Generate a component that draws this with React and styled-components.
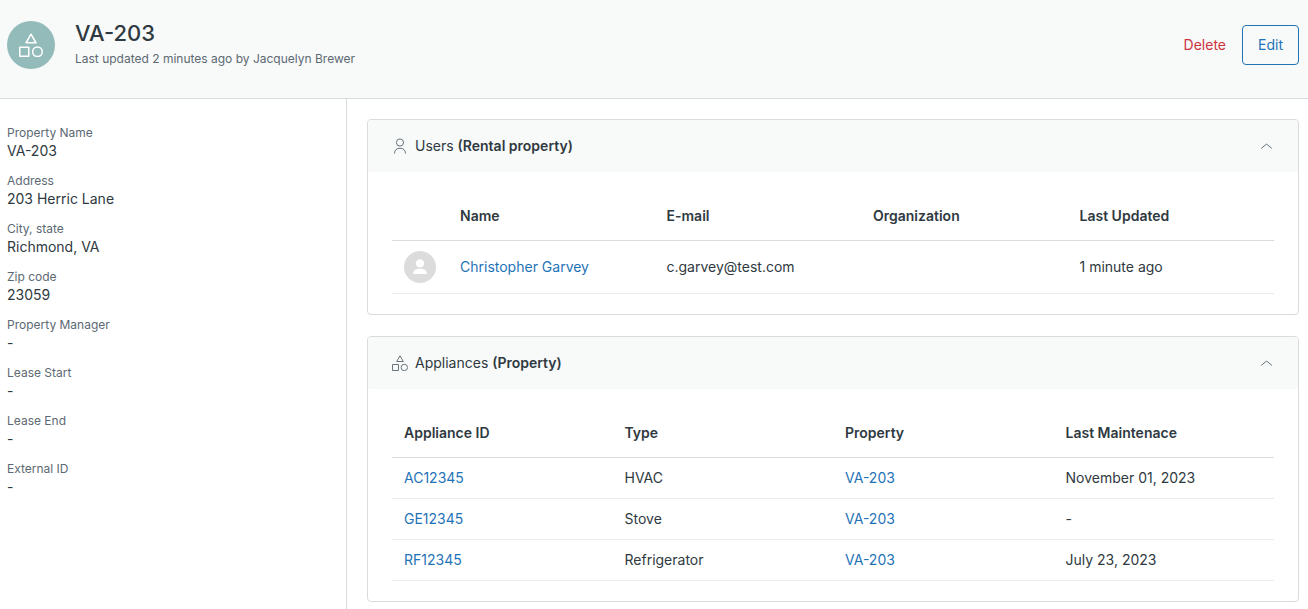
import React from 'react'
import styled, { createGlobalStyle } from 'styled-components';

const GlobalStyle = createGlobalStyle`
  * {
    box-sizing: border-box;
  }
  body {
    margin: 0;
    background: #fff;
    color: #2f3941;
    font-family: Inter, "Liberation Sans", sans-serif;
    font-size: 14px;
    line-height: 20px;
  }
  #root {
    display: flex;
    flex-direction: column;
    min-height: 100vh;
  }
`;

const Header = styled.header`
  display: flex;
  align-items: flex-start;
  gap: 20px;
  padding: 21px 9px 29px 7px;
  background: #f8faf9;
  border-bottom: 1px solid #d8dcde;
`;

const HeaderIcon = styled.div`
  display: flex;
  align-items: center;
  justify-content: center;
  width: 48px;
  height: 48px;
  border-radius: 50%;
  background: #93bbb9;
  color: #fff;
`;

const HeaderText = styled.div`
  flex: 1;
`;

const Title = styled.h1`
  margin: 0;
  font-size: 22px;
  font-weight: 500;
  line-height: 24px;
`;

const Updated = styled.p`
  margin: 5px 0 0;
  color: #5c6973;
  font-size: 12px;
  line-height: 18px;
`;

const Actions = styled.div`
  display: flex;
  align-items: center;
  align-self: center;
`;

const Button = styled.button`
  height: 40px;
  padding: 0 15px;
  border: 1px solid #1f73b7;
  border-radius: 4px;
  background: transparent;
  color: #1f73b7;
  font: inherit;
  cursor: pointer;
`;

const DeleteButton = styled(Button)`
  border-color: transparent;
  color: #cc3340;
`;

const Layout = styled.div`
  display: flex;
  flex: 1;
`;

const Sidebar = styled.aside`
  flex: 0 0 347px;
  padding: 25px 7px;
  border-right: 1px solid #d8dcde;
`;

const Fields = styled.dl`
  display: flex;
  flex-direction: column;
  gap: 12px;
  margin: 0;
`;

const Label = styled.dt`
  color: #5c6973;
  font-size: 12px;
  line-height: 18px;
`;

const Value = styled.dd`
  margin: 0;
  line-height: 18px;
`;

const Content = styled.main`
  display: flex;
  flex: 1;
  flex-direction: column;
  gap: 21px;
  min-width: 0;
  padding: 20px 9px 8px 20px;
`;

const Card = styled.section`
  border: 1px solid #d8dcde;
  border-radius: 4px;
`;

const CardHeader = styled.button`
  display: flex;
  align-items: center;
  gap: 7px;
  width: 100%;
  height: 52px;
  padding: 0 24px;
  border: none;
  border-radius: 3px;
  background: #f8faf9;
  color: inherit;
  font: inherit;
  text-align: left;
  cursor: pointer;

  svg {
    color: #68737d;
  }
`;

const CardTitle = styled.span`
  flex: 1;

  b {
    font-weight: 600;
  }
`;

const CardBody = styled.div`
  padding: 20px 24px;
`;

const Table = styled.table`
  width: 100%;
  table-layout: fixed;
  border-spacing: 0;
  text-align: left;
`;

const Th = styled.th`
  width: ${props => props.$width || 'auto'};
  height: 49px;
  padding: 0 12px;
  border-bottom: 1px solid #d8dcde;
  font-weight: 600;
`;

const Td = styled.td`
  padding: 10px 12px;
  border-bottom: 1px solid #e9ebed;
`;

const Link = styled.a`
  color: #1f73b7;
  text-decoration: none;
`;

const UserAvatar = styled.svg`
  display: block;
  width: 32px;
  height: 32px;
`;

const ShapesIcon = ({ size }) => (
  <svg width={size} height={size} viewBox="0 0 16 16" fill="none" stroke="currentColor" strokeLinejoin="round">
    <path d="M8 .8l3.3 5.7H4.7z" />
    <rect x=".5" y="9.5" width="6" height="6" />
    <circle cx="12.3" cy="12.5" r="3.2" />
  </svg>
)

const UserIcon = () => (
  <svg width="16" height="16" viewBox="0 0 16 16" fill="none" stroke="currentColor" strokeLinecap="round">
    <circle cx="8" cy="4.5" r="3.6" />
    <path d="M2.5 15.2c0-3 2.2-5 5.5-5s5.5 2 5.5 5" />
  </svg>
)

const ChevronIcon = () => (
  <svg width="16" height="16" viewBox="0 0 16 16" fill="none" stroke="currentColor" strokeLinecap="round" strokeLinejoin="round">
    <path d="M3.5 10.2l4.6-3.8a.7.7 0 0 1 .9 0l4.6 3.8" />
  </svg>
)

const Avatar = () => (
  <UserAvatar viewBox="0 0 32 32" aria-hidden="true">
    <circle cx="16" cy="16" r="16" fill="#dcdcdc" />
    <circle cx="16" cy="12.4" r="4.2" fill="#fff" />
    <path d="M9 23c0-3.6 3.2-5.2 7-5.2s7 1.6 7 5.2z" fill="#fff" />
  </UserAvatar>
)

const fields = [
  ['Property Name', 'VA-203'],
  ['Address', '203 Herric Lane'],
  ['City, state', 'Richmond, VA'],
  ['Zip code', '23059'],
  ['Property Manager', '-'],
  ['Lease Start', '-'],
  ['Lease End', '-'],
  ['External ID', '-'],
];

const users = [
  { name: 'Christopher Garvey', email: 'c.garvey@test.com', organization: '', updated: '1 minute ago' },
];

const appliances = [
  { id: 'AC12345', type: 'HVAC', property: 'VA-203', maintenance: 'November 01, 2023' },
  { id: 'GE12345', type: 'Stove', property: 'VA-203', maintenance: '-' },
  { id: 'RF12345', type: 'Refrigerator', property: 'VA-203', maintenance: 'July 23, 2023' },
];

const Panel = ({ icon, title, relation, children }) => {
  const [open, setOpen] = React.useState(true)

  return <Card>
    <CardHeader type="button" aria-expanded={open} onClick={() => setOpen(!open)}>
      {icon}
      <CardTitle>{title} <b>({relation})</b></CardTitle>
      <ChevronIcon />
    </CardHeader>
    {open && <CardBody>{children}</CardBody>}
  </Card>
}

export default function App() {
  return <>
    <GlobalStyle />
    <Header>
      <HeaderIcon><ShapesIcon size={24} /></HeaderIcon>
      <HeaderText>
        <Title>VA-203</Title>
        <Updated>Last updated 2 minutes ago by Jacquelyn Brewer</Updated>
      </HeaderText>
      <Actions>
        <DeleteButton type="button">Delete</DeleteButton>
        <Button type="button">Edit</Button>
      </Actions>
    </Header>
    <Layout>
      <Sidebar>
        <Fields>
          {fields.map(([label, value]) => (
            <div key={label}>
              <Label>{label}</Label>
              <Value>{value}</Value>
            </div>
          ))}
        </Fields>
      </Sidebar>
      <Content>
        <Panel icon={<UserIcon />} title="Users" relation="Rental property">
          <Table>
            <thead>
              <tr>
                <Th $width="56px" aria-label="Avatar" />
                <Th>Name</Th>
                <Th>E-mail</Th>
                <Th>Organization</Th>
                <Th>Last Updated</Th>
              </tr>
            </thead>
            <tbody>
              {users.map(user => (
                <tr key={user.email}>
                  <Td><Avatar /></Td>
                  <Td><Link href="#user">{user.name}</Link></Td>
                  <Td>{user.email}</Td>
                  <Td>{user.organization}</Td>
                  <Td>{user.updated}</Td>
                </tr>
              ))}
            </tbody>
          </Table>
        </Panel>
        <Panel icon={<ShapesIcon size={16} />} title="Appliances" relation="Property">
          <Table>
            <thead>
              <tr>
                <Th>Appliance ID</Th>
                <Th>Type</Th>
                <Th>Property</Th>
                <Th>Last Maintenace</Th>
              </tr>
            </thead>
            <tbody>
              {appliances.map(item => (
                <tr key={item.id}>
                  <Td><Link href="#appliance">{item.id}</Link></Td>
                  <Td>{item.type}</Td>
                  <Td><Link href="#property">{item.property}</Link></Td>
                  <Td>{item.maintenance}</Td>
                </tr>
              ))}
            </tbody>
          </Table>
        </Panel>
      </Content>
    </Layout>
  </>
}
